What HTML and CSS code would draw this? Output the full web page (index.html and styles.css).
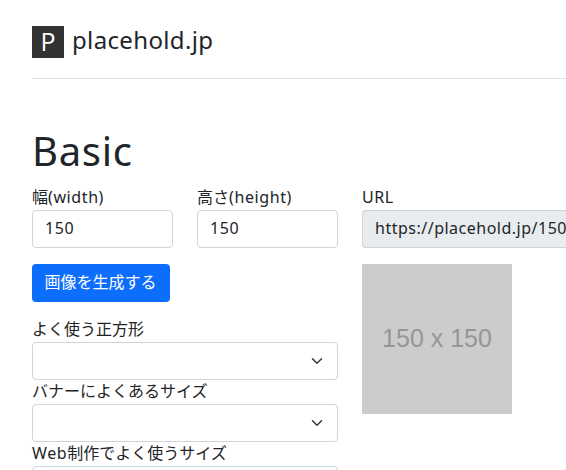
FILE: index.html
```html
<!DOCTYPE html>
<html lang="ja">
<head>
<meta charset="utf-8">
<title>placehold.jp</title>
<link rel="stylesheet" href="styles.css">
</head>
<body>
<div class="page">
  <header class="header">
    <span class="logo">P</span><span class="brand">placehold.jp</span>
  </header>
  <h1 class="title">Basic</h1>
  <main class="columns">
    <section class="settings">
      <div class="sizes">
        <label class="field">幅<span class="latin">(width)</span><input class="control" value="150"></label>
        <label class="field">高さ<span class="latin">(height)</span><input class="control" value="150"></label>
      </div>
      <button class="button" type="button">画像を生成する</button>
      <div class="field">よく使う正方形
        <div class="control select"><svg class="chevron" viewBox="0 0 16 16"><path d="m2 5 6 6 6-6"/></svg></div>
      </div>
      <div class="field">バナーによくあるサイズ
        <div class="control select"><svg class="chevron" viewBox="0 0 16 16"><path d="m2 5 6 6 6-6"/></svg></div>
      </div>
      <div class="field"><span class="latin">Web</span>制作でよく使うサイズ
        <div class="control select"><svg class="chevron" viewBox="0 0 16 16"><path d="m2 5 6 6 6-6"/></svg></div>
      </div>
    </section>
    <section class="result">
      <label class="field"><span class="latin">URL</span><input class="control url" value="https://placehold.jp/150x150.png" readonly></label>
      <div class="preview">150 x 150</div>
    </section>
  </main>
</div>
</body>
</html>
```
FILE: styles.css
```css
* { box-sizing: border-box; }
html { overflow: hidden; }
body {
  margin: 0;
  height: 470px;
  overflow: hidden;
  background: #fff;
  color: #212529;
  font: 16px/24px "Noto Sans", "Noto Sans CJK JP", sans-serif;
}
.page { height: 470px; padding: 24px 0 0 32px; overflow: hidden; }
.header {
  display: flex;
  gap: 8px;
  height: 55px;
  padding-top: 2px;
  border-bottom: 1px solid #dee2e6;
}
.logo {
  width: 32px;
  height: 32px;
  background: #333;
  color: #fff;
  font: 400 25px/30px "Open Sans", sans-serif;
  text-align: center;
}
.brand { font-size: 24px; line-height: 27px; letter-spacing: 0.35px; }
.title {
  margin: 48px 0 11px;
  font-size: 40px;
  font-weight: 400;
  line-height: 48px;
  letter-spacing: 0.7px;
}
.columns { display: grid; grid-template-columns: 306px 1fr; gap: 24px; }
.result { min-width: 0; }
.sizes { display: grid; grid-template-columns: 141px 141px; gap: 24px; }
.field { display: block; line-height: 22px; }
.latin { letter-spacing: 0.6px; }
.control {
  display: block;
  width: 100%;
  height: 38px;
  margin-top: 2px;
  padding: 5px 12px 7px;
  border: 1px solid #ced4da;
  border-radius: 4px;
  background: #fff;
  color: #212529;
  font: inherit;
  line-height: 24px;
  letter-spacing: 0.6px;
}
.result .control { border-right: 0; border-radius: 4px 0 0 4px; padding-right: 0; }
.url { background: #e9ecef; letter-spacing: 0.5px; }
.button {
  display: block;
  width: 138px;
  height: 38px;
  margin: 16px 0;
  padding: 0 1px 2px 0;
  border: 0;
  border-radius: 4px;
  background: #0d6efd;
  color: #fff;
  font: inherit;
}
.select {
  display: flex;
  align-items: center;
  justify-content: flex-end;
  padding: 6px 13px 6px 12px;
}
.chevron {
  width: 14px;
  height: 12px;
  fill: none;
  stroke: #343a40;
  stroke-width: 2;
  stroke-linecap: round;
  stroke-linejoin: round;
}
.preview {
  width: 150px;
  height: 150px;
  margin-top: 16px;
  background: #ccc;
  color: #969696;
  font: 25px/148px "Liberation Sans", sans-serif;
  text-align: center;
}
```
